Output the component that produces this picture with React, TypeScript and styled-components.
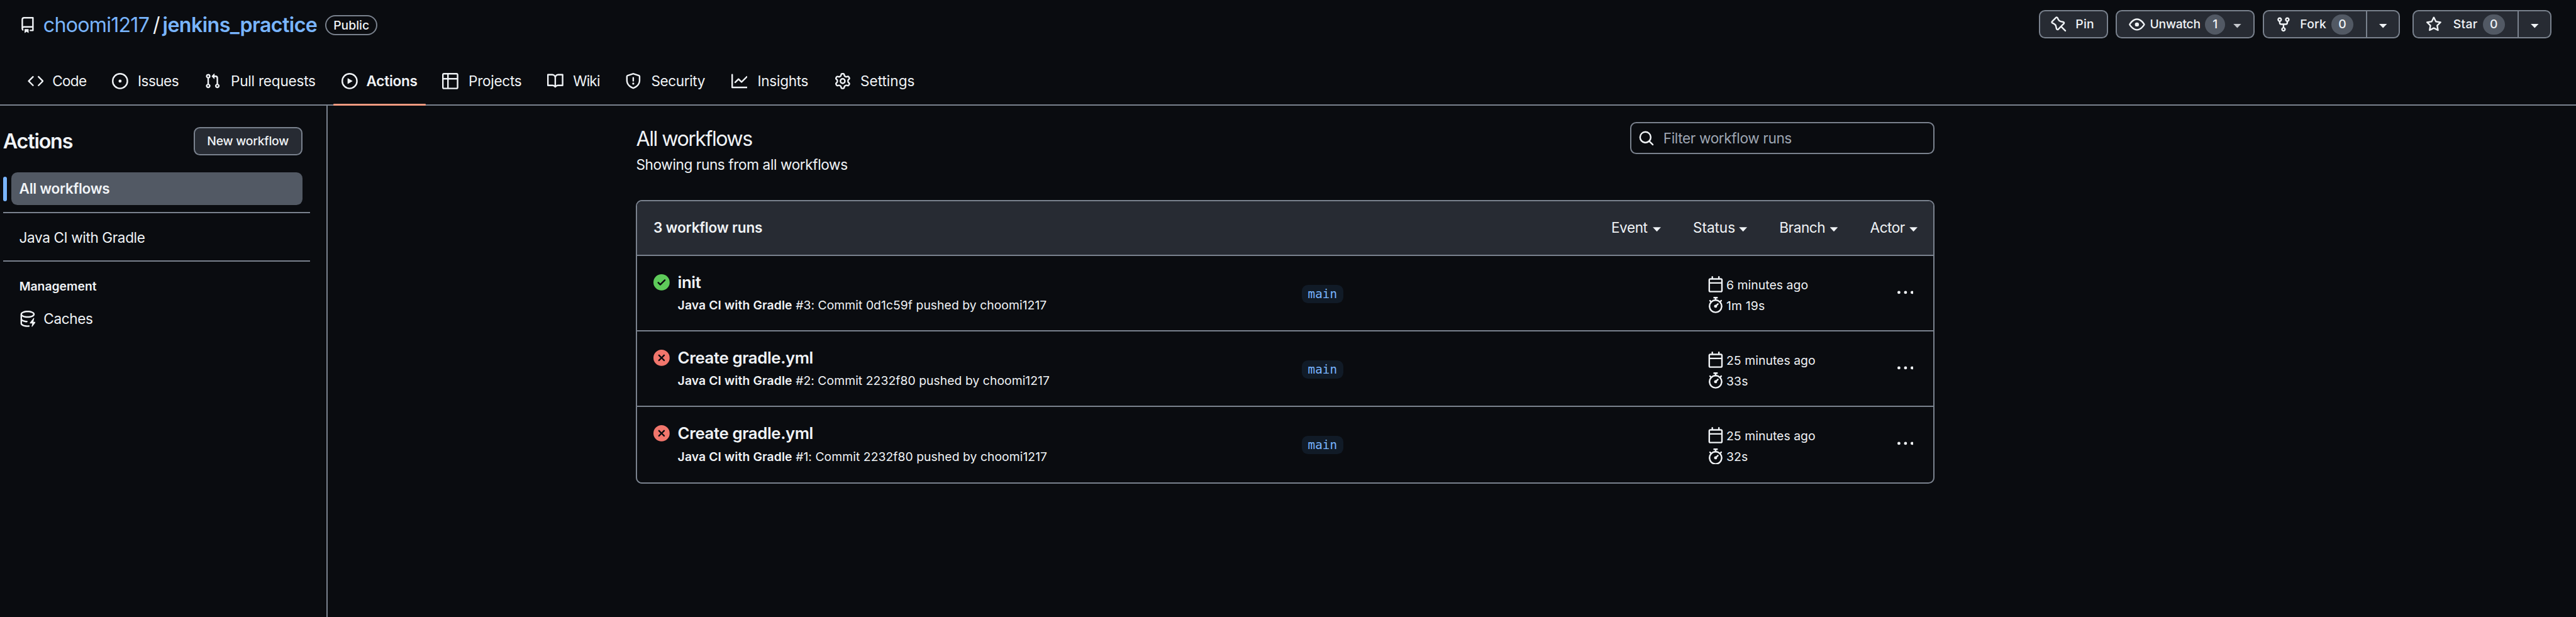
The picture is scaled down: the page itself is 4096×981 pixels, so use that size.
import React from "react";
import styled, { createGlobalStyle, css } from "styled-components";

/* One design unit is 4096 / 2539 of a device pixel. */
const UNIT = 4096 / 2539;
const u = (n: number) => `${+(n * UNIT).toFixed(3)}px`;

const color = {
  canvas: "#0a0c10",
  surface: "#272b33",
  selected: "#525964",
  border: "#7a828e",
  fg: "#f0f3f6",
  muted: "#9ea5b2",
  accent: "#79b5fe",
  underline: "#f29a80",
  success: "#5ecb5a",
  danger: "#f1766c",
  branchBg: "#111b27",
};

const LINE = "2px";

const Global = createGlobalStyle`
  *, *::before, *::after { box-sizing: border-box; }
  html, body { margin: 0; padding: 0; background: ${color.canvas}; }
  body { overflow: hidden; }
  h1, h2, p { margin: 0; font-weight: inherit; font-size: inherit; }
  button, input { font: inherit; color: inherit; margin: 0; padding: 0; border: 0; background: none; }
`;

/* ---------- icons ---------- */

const paths = {
  repo: "M2 2.5A2.5 2.5 0 0 1 4.5 0h8.75a.75.75 0 0 1 .75.75v12.5a.75.75 0 0 1-.75.75h-2.5a.75.75 0 0 1 0-1.5h1.75v-2h-8a1 1 0 0 0-.714 1.7.75.75 0 1 1-1.072 1.05A2.495 2.495 0 0 1 2 11.5Zm10.5-1h-8a1 1 0 0 0-1 1v6.708A2.486 2.486 0 0 1 4.5 9h8ZM5 12.25a.25.25 0 0 1 .25-.25h3.5a.25.25 0 0 1 .25.25v3.25a.25.25 0 0 1-.4.2l-1.45-1.087a.249.249 0 0 0-.3 0L5.4 15.7a.25.25 0 0 1-.4-.2Z",
  code: "m11.28 3.22 4.25 4.25a.75.75 0 0 1 0 1.06l-4.25 4.25a.749.749 0 0 1-1.275-.326.749.749 0 0 1 .215-.734L13.94 8l-3.72-3.72a.749.749 0 0 1 .326-1.275.749.749 0 0 1 .734.215Zm-6.56 0a.751.751 0 0 1 1.042.018.751.751 0 0 1 .018 1.042L2.06 8l3.72 3.72a.749.749 0 0 1-.326 1.275.749.749 0 0 1-.734-.215L.47 8.53a.75.75 0 0 1 0-1.06Z",
  issue: "M8 9.5a1.5 1.5 0 1 0 0-3 1.5 1.5 0 0 0 0 3ZM8 0a8 8 0 1 1 0 16A8 8 0 0 1 8 0ZM1.5 8a6.5 6.5 0 1 0 13 0 6.5 6.5 0 0 0-13 0Z",
  pull: "M1.5 3.25a2.25 2.25 0 1 1 3 2.122v5.256a2.251 2.251 0 1 1-1.5 0V5.372A2.25 2.25 0 0 1 1.5 3.25Zm5.677-.177L9.573.677A.25.25 0 0 1 10 .854V2.5h1A2.5 2.5 0 0 1 13.5 5v5.628a2.251 2.251 0 1 1-1.5 0V5a1 1 0 0 0-1-1h-1v1.646a.25.25 0 0 1-.427.177L7.177 3.427a.25.25 0 0 1 0-.354ZM3.75 2.5a.75.75 0 1 0 0 1.5.75.75 0 0 0 0-1.5Zm0 9.5a.75.75 0 1 0 0 1.5.75.75 0 0 0 0-1.5Zm8.25.75a.75.75 0 1 0 1.5 0 .75.75 0 0 0-1.5 0Z",
  play: "M8 0a8 8 0 1 1 0 16A8 8 0 0 1 8 0ZM1.5 8a6.5 6.5 0 1 0 13 0 6.5 6.5 0 0 0-13 0Zm4.879-2.773 4.264 2.559a.25.25 0 0 1 0 .428l-4.264 2.559A.25.25 0 0 1 6 10.559V5.442a.25.25 0 0 1 .379-.215Z",
  table: "M0 1.75C0 .784.784 0 1.75 0h12.5C15.216 0 16 .784 16 1.75v12.5A1.75 1.75 0 0 1 14.25 16H1.75A1.75 1.75 0 0 1 0 14.25ZM6.5 6.5v8h7.75a.25.25 0 0 0 .25-.25V6.5Zm8-1.5V1.75a.25.25 0 0 0-.25-.25H6.5V5Zm-13 1.5v7.75c0 .138.112.25.25.25H5v-8ZM5 5V1.5H1.75a.25.25 0 0 0-.25.25V5Z",
  book: "M0 1.75A.75.75 0 0 1 .75 1h4.253c1.227 0 2.317.59 3 1.501A3.743 3.743 0 0 1 11.006 1h4.245a.75.75 0 0 1 .75.75v10.5a.75.75 0 0 1-.75.75h-4.507a2.25 2.25 0 0 0-1.591.659l-.622.621a.75.75 0 0 1-1.06 0l-.622-.621A2.25 2.25 0 0 0 5.258 13H.75a.75.75 0 0 1-.75-.75Zm7.251 10.324.004-5.073-.002-2.253A2.25 2.25 0 0 0 5.003 2.5H1.5v9h3.757a3.75 3.75 0 0 1 1.994.574ZM8.755 4.75l-.004 7.322a3.752 3.752 0 0 1 1.992-.572H14.5v-9h-3.495a2.25 2.25 0 0 0-2.25 2.25Z",
  shield: "M7.467.133a1.748 1.748 0 0 1 1.066 0l5.25 1.68A1.75 1.75 0 0 1 15 3.48V7c0 1.566-.32 3.182-1.303 4.682-.983 1.498-2.585 2.813-5.032 3.855a1.697 1.697 0 0 1-1.33 0c-2.447-1.042-4.049-2.357-5.032-3.855C1.32 10.182 1 8.566 1 7V3.48a1.75 1.75 0 0 1 1.217-1.667Zm.61 1.429a.25.25 0 0 0-.153 0l-5.25 1.68a.25.25 0 0 0-.174.238V7c0 1.358.275 2.666 1.057 3.86.784 1.194 2.121 2.34 4.366 3.297a.196.196 0 0 0 .154 0c2.245-.956 3.582-2.104 4.366-3.298C13.225 9.666 13.5 8.36 13.5 7V3.48a.251.251 0 0 0-.174-.237l-5.25-1.68ZM8.75 4.75v3a.75.75 0 0 1-1.5 0v-3a.75.75 0 0 1 1.5 0ZM9 10.5a1 1 0 1 1-2 0 1 1 0 0 1 2 0Z",
  graph: "M1.5 1.75V13.5h13.75a.75.75 0 0 1 0 1.5H.75a.75.75 0 0 1-.75-.75V1.75a.75.75 0 0 1 1.5 0Zm14.28 2.53-5.25 5.25a.75.75 0 0 1-1.06 0L7 7.06 4.28 9.78a.751.751 0 0 1-1.042-.018.751.751 0 0 1-.018-1.042l3.25-3.25a.75.75 0 0 1 1.06 0L10 7.94l4.72-4.72a.751.751 0 0 1 1.042.018.751.751 0 0 1 .018 1.042Z",
  gear: "M8 0a8.2 8.2 0 0 1 .701.031C9.444.095 9.99.645 10.16 1.29l.288 1.107c.018.066.079.158.212.224.231.114.454.243.668.386.123.082.233.09.299.071l1.103-.303c.644-.176 1.392.021 1.82.63.27.385.506.792.704 1.218.315.675.111 1.422-.364 1.891l-.814.806c-.049.048-.098.147-.088.294.016.257.016.515 0 .772-.01.147.038.246.088.294l.814.806c.475.469.679 1.216.364 1.891a7.977 7.977 0 0 1-.704 1.217c-.428.61-1.176.807-1.82.63l-1.102-.302c-.067-.019-.177-.011-.3.071a5.909 5.909 0 0 1-.668.386c-.133.066-.194.158-.211.224l-.29 1.106c-.168.646-.715 1.196-1.458 1.26a8.006 8.006 0 0 1-1.402 0c-.743-.064-1.289-.614-1.458-1.26l-.289-1.106c-.018-.066-.079-.158-.212-.224a5.738 5.738 0 0 1-.668-.386c-.123-.082-.233-.09-.299-.071l-1.103.303c-.644.176-1.392-.021-1.82-.63a8.12 8.12 0 0 1-.704-1.218c-.315-.675-.111-1.422.363-1.891l.815-.806c.05-.048.098-.147.088-.294a6.214 6.214 0 0 1 0-.772c.01-.147-.038-.246-.088-.294l-.815-.806C.635 6.045.431 5.298.746 4.623a7.92 7.92 0 0 1 .704-1.217c.428-.61 1.176-.807 1.82-.63l1.102.302c.067.019.177.011.3-.071.214-.143.437-.272.668-.386.133-.066.194-.158.211-.224l.29-1.106C6.009.645 6.556.095 7.299.03 7.53.01 7.764 0 8 0Zm-.571 1.525c-.036.003-.108.036-.137.146l-.289 1.105c-.147.561-.549.967-.998 1.189-.173.086-.34.183-.5.29-.417.278-.97.423-1.529.27l-1.103-.303c-.109-.03-.175.016-.195.045-.22.312-.412.644-.573.99-.014.031-.021.11.059.19l.815.806c.411.406.562.957.53 1.456a4.709 4.709 0 0 0 0 .582c.032.499-.119 1.05-.53 1.456l-.815.806c-.081.08-.073.159-.059.19.162.346.353.677.573.989.02.03.085.076.195.046l1.102-.303c.56-.153 1.113-.008 1.53.27.161.107.328.204.501.29.447.222.85.629.997 1.189l.289 1.105c.029.109.101.143.137.146a6.6 6.6 0 0 0 1.142 0c.036-.003.108-.036.137-.146l.289-1.105c.147-.561.549-.967.998-1.189.173-.086.34-.183.5-.29.417-.278.97-.423 1.529-.27l1.103.303c.109.029.175-.016.195-.045.22-.313.411-.644.573-.99.014-.031.021-.11-.059-.19l-.815-.806c-.411-.406-.562-.957-.53-1.456a4.709 4.709 0 0 0 0-.582c-.032-.499.119-1.05.53-1.456l.815-.806c.081-.08.073-.159.059-.19a6.464 6.464 0 0 0-.573-.989c-.02-.03-.085-.076-.195-.046l-1.102.303c-.56.153-1.113.008-1.53-.27a4.44 4.44 0 0 0-.501-.29c-.447-.222-.85-.629-.997-1.189l-.289-1.105c-.029-.11-.101-.143-.137-.146a6.6 6.6 0 0 0-1.142 0ZM11 8a3 3 0 1 1-6 0 3 3 0 0 1 6 0ZM9.5 8a1.5 1.5 0 1 0-3.001.001A1.5 1.5 0 0 0 9.5 8Z",
  pin: "M4.456.734a1.75 1.75 0 0 1 2.826.504l.613 1.327a3.081 3.081 0 0 0 2.084 1.707l2.454.584c1.332.317 1.8 1.972.832 2.94L11.06 10l3.72 3.72a.748.748 0 0 1-.332 1.265.75.75 0 0 1-.729-.205L10 11.06l-2.204 2.205c-.968.968-2.623.5-2.94-.832l-.584-2.454a3.081 3.081 0 0 0-1.707-2.084l-1.327-.613a1.75 1.75 0 0 1-.504-2.826L4.456.734ZM5.92 1.866a.25.25 0 0 0-.404-.072L1.794 5.516a.25.25 0 0 0 .072.404l1.328.613A4.582 4.582 0 0 1 5.73 9.63l.584 2.454a.25.25 0 0 0 .42.12l5.47-5.47a.25.25 0 0 0-.12-.42L9.63 5.73a4.581 4.581 0 0 1-3.098-2.537L5.92 1.866Z",
  eye: "M8 2c1.981 0 3.671.992 4.933 2.078 1.27 1.091 2.187 2.345 2.637 3.023a1.62 1.62 0 0 1 0 1.798c-.45.678-1.367 1.932-2.637 3.023C11.67 13.008 9.981 14 8 14c-1.981 0-3.671-.992-4.933-2.078C1.797 10.83.88 9.576.43 8.898a1.62 1.62 0 0 1 0-1.798c.45-.677 1.367-1.931 2.637-3.022C4.33 2.992 6.019 2 8 2ZM1.679 7.932a.12.12 0 0 0 0 .136c.411.622 1.241 1.75 2.366 2.717C5.176 11.758 6.527 12.5 8 12.5c1.473 0 2.825-.742 3.955-1.715 1.124-.967 1.954-2.096 2.366-2.717a.12.12 0 0 0 0-.136c-.412-.621-1.242-1.75-2.366-2.717C10.824 4.242 9.473 3.5 8 3.5c-1.473 0-2.825.742-3.955 1.715-1.124.967-1.954 2.096-2.366 2.717ZM8 10a2 2 0 1 1-.001-3.999A2 2 0 0 1 8 10Z",
  fork: "M5 5.372v.878c0 .414.336.75.75.75h4.5a.75.75 0 0 0 .75-.75v-.878a2.25 2.25 0 1 1 1.5 0v.878a2.25 2.25 0 0 1-2.25 2.25h-1.5v2.128a2.251 2.251 0 1 1-1.5 0V8.5h-1.5A2.25 2.25 0 0 1 3.5 6.25v-.878a2.25 2.25 0 1 1 1.5 0ZM5 3.25a.75.75 0 1 0-1.5 0 .75.75 0 0 0 1.5 0Zm6.75.75a.75.75 0 1 0 0-1.5.75.75 0 0 0 0 1.5Zm-3 8.75a.75.75 0 1 0-1.5 0 .75.75 0 0 0 1.5 0Z",
  star: "M8 .25a.75.75 0 0 1 .673.418l1.882 3.815 4.21.612a.75.75 0 0 1 .416 1.279l-3.046 2.97.719 4.192a.751.751 0 0 1-1.088.791L8 12.347l-3.766 1.98a.75.75 0 0 1-1.088-.79l.72-4.194L.818 6.374a.75.75 0 0 1 .416-1.28l4.21-.611L7.327.668A.75.75 0 0 1 8 .25Zm0 2.445L6.615 5.5a.75.75 0 0 1-.564.41l-3.097.45 2.24 2.184a.75.75 0 0 1 .216.664l-.528 3.084 2.769-1.456a.75.75 0 0 1 .698 0l2.77 1.456-.53-3.084a.75.75 0 0 1 .216-.664l2.24-2.183-3.096-.45a.75.75 0 0 1-.564-.41L8 2.694Z",
  search: "M10.68 11.74a6 6 0 0 1-7.922-8.982 6 6 0 0 1 8.982 7.922l3.04 3.04a.749.749 0 0 1-.326 1.275.749.749 0 0 1-.734-.215ZM11.5 7a4.499 4.499 0 1 0-8.997 0A4.499 4.499 0 0 0 11.5 7Z",
  success: "M8 16A8 8 0 1 1 8 0a8 8 0 0 1 0 16Zm3.78-9.72a.751.751 0 0 0-.018-1.042.751.751 0 0 0-1.042-.018L6.75 9.19 5.28 7.72a.751.751 0 0 0-1.042.018.751.751 0 0 0-.018 1.042l2 2a.75.75 0 0 0 1.06 0Z",
  failure: "M2.343 13.657A8 8 0 1 1 13.658 2.343 8 8 0 0 1 2.343 13.657ZM6.03 4.97a.751.751 0 0 0-1.042.018.751.751 0 0 0-.018 1.042L6.94 8 4.97 9.97a.749.749 0 0 0 .326 1.275.749.749 0 0 0 .734-.215L8 9.06l1.97 1.97a.749.749 0 0 0 1.275-.326.749.749 0 0 0-.215-.734L9.06 8l1.97-1.97a.749.749 0 0 0-.326-1.275.749.749 0 0 0-.734.215L8 6.94Z",
  calendar: "M4.75 0a.75.75 0 0 1 .75.75V2h5V.75a.75.75 0 0 1 1.5 0V2h1.25c.966 0 1.75.784 1.75 1.75v10.5A1.75 1.75 0 0 1 13.25 16H2.75A1.75 1.75 0 0 1 1 14.25V3.75C1 2.784 1.784 2 2.75 2H4V.75A.75.75 0 0 1 4.75 0ZM2.5 7.5v6.75c0 .138.112.25.25.25h10.5a.25.25 0 0 0 .25-.25V7.5Zm10.75-4H2.75a.25.25 0 0 0-.25.25V6h11V3.75a.25.25 0 0 0-.25-.25Z",
  stopwatch: "M5.75.75A.75.75 0 0 1 6.5 0h3a.75.75 0 0 1 0 1.5h-.75v1l-.001.041a6.724 6.724 0 0 1 3.464 1.435l.007-.006.75-.75a.749.749 0 0 1 1.275.326.749.749 0 0 1-.215.734l-.75.75-.006.007a6.75 6.75 0 1 1-10.548 0L2.72 5.03l-.75-.75a.751.751 0 0 1 .018-1.042.751.751 0 0 1 1.042-.018l.75.75.007.006A6.72 6.72 0 0 1 7.25 2.541V1.5H6.5a.75.75 0 0 1-.75-.75ZM8 14.5a5.25 5.25 0 1 0-.001-10.501A5.25 5.25 0 0 0 8 14.5Zm.389-6.7 1.33-1.33a.75.75 0 1 1 1.061 1.06L9.45 8.861A1.503 1.503 0 0 1 8 10.75a1.499 1.499 0 1 1 .389-2.95Z",
  kebab: "M8 9.5a1.5 1.5 0 1 0 0-3 1.5 1.5 0 0 0 0 3ZM1.5 9.5a1.5 1.5 0 1 0 0-3 1.5 1.5 0 0 0 0 3Zm13 0a1.5 1.5 0 1 0 0-3 1.5 1.5 0 0 0 0 3Z",
  cache: "M2.5 5.724V8c0 .248.238.7 1.169 1.159.874.43 2.144.745 3.62.822a.75.75 0 1 1-.078 1.498c-1.622-.085-3.102-.432-4.204-.975a5.565 5.565 0 0 1-.507-.28V12.5c0 .133.058.318.282.551.227.237.591.483 1.101.707 1.015.447 2.47.742 4.117.742.406 0 .802-.018 1.183-.052a.751.751 0 1 1 .134 1.494C8.89 15.98 8.45 16 8 16c-1.805 0-3.475-.32-4.721-.869-.623-.274-1.173-.619-1.579-1.041-.408-.425-.7-.964-.7-1.59v-9c0-.626.292-1.165.7-1.591.406-.42.956-.766 1.579-1.04C4.525.32 6.195 0 8 0c1.806 0 3.476.32 4.721.869.623.274 1.173.619 1.579 1.041.408.425.7.964.7 1.59 0 .626-.292 1.165-.7 1.591-.406.42-.956.766-1.578 1.04C11.475 6.68 9.805 7 8 7c-1.805 0-3.475-.32-4.721-.869a6.15 6.15 0 0 1-.779-.407Zm0-2.224c0 .133.058.318.282.551.227.237.591.483 1.101.707C4.898 5.205 6.353 5.5 8 5.5c1.646 0 3.101-.295 4.118-.742.508-.224.873-.471 1.1-.708.224-.232.282-.417.282-.55 0-.133-.058-.318-.282-.551-.227-.237-.591-.483-1.101-.707C11.102 1.795 9.647 1.5 8 1.5c-1.646 0-3.101.295-4.118.742-.508.224-.873.471-1.1.708-.224.232-.282.417-.282.55ZM14.49 7.582a.375.375 0 0 0-.66-.313l-3.625 4.625a.375.375 0 0 0 .295.606h2.127l-.619 2.922a.375.375 0 0 0 .666.304l3.125-4.125A.375.375 0 0 0 15.5 11h-1.778l.769-3.418Z",
};

type IconName = keyof typeof paths;

const Svg = styled.svg<{ $color?: string }>`
  flex: none;
  display: block;
  width: ${u(16)};
  height: ${u(16)};
  fill: ${(p) => p.$color ?? color.fg};
`;

const Icon = ({ name, tint }: { name: IconName; tint?: string }) => (
  <Svg viewBox="0 0 16 16" $color={tint} aria-hidden="true">
    <path fillRule="evenodd" d={paths[name]} />
  </Svg>
);

const Caret = styled.span<{ $dim?: boolean }>`
  flex: none;
  width: ${u(8)};
  height: ${u(4.3)};
  margin-top: ${u(3)};
  clip-path: polygon(0 0, 100% 0, 50% 100%);
  background: ${(p) => (p.$dim ? "#c4c7cc" : color.fg)};
`;

/* ---------- text ---------- */

const Label = styled.span<{ $w?: number; $ls?: number }>`
  flex: none;
  white-space: nowrap;
  letter-spacing: ${(p) => p.$ls ?? 0}em;
  ${(p) => p.$w !== undefined && css`width: ${u(p.$w)};`}
`;

/* ---------- page ---------- */

const Page = styled.div`
  width: 4096px;
  height: 981px;
  display: flex;
  flex-direction: column;
  overflow: hidden;
  background: ${color.canvas};
  color: ${color.fg};
  font: 400 ${u(14)} / ${u(21)} Inter, "Noto Sans", sans-serif;
`;

const Header = styled.header`
  flex: none;
  height: 168px;
  display: flex;
  flex-direction: column;
  border-bottom: ${LINE} solid ${color.border};
`;

const TitleBar = styled.div`
  flex: none;
  height: ${u(56)};
  display: flex;
  align-items: flex-start;
  padding: 0 ${u(24)} 0 ${u(19)};
`;

const RepoTitle = styled.h1`
  height: ${u(50)};
  display: flex;
  align-items: center;
  font-size: ${u(20)};
  line-height: ${u(30)};
`;

const Owner = styled(Label)`
  margin-left: ${u(7.7)};
  color: ${color.accent};
`;

const Slash = styled.span`
  width: ${u(10.7)};
  text-align: center;
`;

const RepoName = styled(Label)`
  padding-left: ${u(0.7)};
  color: ${color.accent};
  font-weight: 600;
`;

const Visibility = styled.span`
  width: ${u(51.4)};
  height: ${u(20)};
  display: flex;
  align-items: center;
  justify-content: center;
  border: ${LINE} solid ${color.border};
  border-radius: ${u(10)};
  font-size: ${u(12)};
  font-weight: 500;
`;

const ActionBar = styled.div`
  margin: ${u(10)} 0 0 auto;
  display: flex;
  gap: ${u(8)};
`;

const ButtonGroup = styled.div<{ $w: number; $after?: number }>`
  width: ${(p) => u(p.$w)};
  height: ${u(28)};
  margin-right: ${(p) => u(p.$after ?? 0)};
  display: flex;
  align-items: stretch;
  overflow: hidden;
  background: ${color.surface};
  border: ${LINE} solid ${color.border};
  border-radius: ${u(6)};
  font-size: ${u(12)};
  line-height: ${u(18)};
  font-weight: 500;
`;

const ButtonPart = styled.button<{ $gap?: number; $pad?: number }>`
  flex: 1;
  display: flex;
  align-items: center;
  gap: ${(p) => u(p.$gap ?? 8)};
  padding-left: ${(p) => u(p.$pad ?? 11.6)};
`;

const CaretPart = styled.button<{ $w: number }>`
  flex: none;
  width: ${(p) => u(p.$w)};
  display: flex;
  align-items: center;
  justify-content: center;
  border-left: ${LINE} solid ${color.border};
`;

const Counter = styled.span<{ $w: number; $shift?: number }>`
  flex: none;
  width: ${(p) => u(p.$w)};
  height: ${u(20)};
  margin-right: ${(p) => u(p.$shift ?? 0)};
  border-radius: ${u(10)};
  display: flex;
  align-items: center;
  justify-content: center;
  background: ${color.selected};
`;

const Nav = styled.nav`
  flex: none;
  display: flex;
  gap: ${u(8)};
  padding-left: ${u(19)};
`;

const Tab = styled.a<{ $w: number; $gap: number; $active?: boolean }>`
  position: relative;
  flex: none;
  width: ${(p) => u(p.$w)};
  height: ${u(48)};
  display: flex;
  align-items: center;
  gap: ${(p) => u(p.$gap)};
  padding-left: ${u(8)};
  font-weight: ${(p) => (p.$active ? 600 : 400)};

  ${(p) =>
    p.$active &&
    css`
      &::after {
        content: "";
        position: absolute;
        left: 0;
        bottom: 0;
        width: 100%;
        height: 3px;
        border-radius: 1px;
        background: ${color.underline};
      }
    `}
`;

const Body = styled.div`
  flex: 1;
  min-height: 0;
  display: flex;
`;

/* ---------- sidebar ---------- */

const Sidebar = styled.aside`
  flex: none;
  width: ${u(323)};
  padding: ${u(21)} ${u(16)} 0 ${u(3)};
  border-right: ${LINE} solid ${color.border};
`;

const SideHead = styled.div`
  height: ${u(28)};
  display: flex;
  align-items: center;
  justify-content: space-between;
  padding-right: ${u(7.8)};
`;

const SideTitle = styled.h2`
  font-size: ${u(20)};
  line-height: ${u(30)};
  font-weight: 600;
  letter-spacing: -0.0368em;
  padding-top: ${u(1)};
`;

const SideItem = styled.a<{ $selected?: boolean; $top: number }>`
  position: relative;
  height: ${u(32)};
  margin: ${(p) => u(p.$top)} ${u(7.8)} 0 ${u(8)};
  padding-left: ${u(8)};
  display: flex;
  align-items: center;
  gap: ${u(8)};
  border-radius: ${u(6)};

  ${(p) =>
    p.$selected &&
    css`
      background: ${color.selected};
      font-weight: 600;

      &::before {
        content: "";
        position: absolute;
        left: -${u(8)};
        top: ${u(4)};
        width: ${u(4)};
        height: ${u(24)};
        border-radius: ${u(2)};
        background: ${color.accent};
      }
    `}
`;

const SideRule = styled.div<{ $top: number }>`
  height: ${LINE};
  margin-top: calc(${(p) => u(p.$top)} - 0.4px);
  background: ${color.border};
`;

const SideCaption = styled.div`
  margin: ${u(15)} 0 0 ${u(16)};
  font-size: ${u(12)};
  line-height: ${u(18)};
  font-weight: 600;
`;

/* ---------- main ---------- */

const Main = styled.main`
  width: ${u(304 + 1280)};
  padding: ${u(16)} 0 0 ${u(304)};
`;

const Intro = styled.div`
  height: ${u(77)};
  display: flex;
  justify-content: space-between;
`;

const Heading = styled.h2`
  margin-top: ${u(1.9)};
  font-size: ${u(20)};
  line-height: ${u(30)};
`;

const Search = styled.label`
  width: ${u(300)};
  height: ${u(32)};
  display: flex;
  align-items: center;
  gap: ${u(8.8)};
  padding-left: ${u(6.4)};
  border: ${LINE} solid ${color.border};
  border-radius: ${u(6)};

  input {
    flex: 1;
    outline: none;
    letter-spacing: -0.0163em;
  }
  input::placeholder {
    color: ${color.muted};
    opacity: 1;
  }
`;

const Runs = styled.section`
  height: ${u(279.5)};
  overflow: hidden;
  border: ${LINE} solid ${color.border};
  border-radius: ${u(6)};
`;

const RunsHead = styled.div`
  height: calc(${u(55)} - 2px);
  display: flex;
  align-items: center;
  justify-content: space-between;
  padding: 0 calc(${u(17)} - 2px);
  background: ${color.surface};
  border-bottom: ${LINE} solid ${color.border};
`;

const RunsCount = styled(Label)`
  font-weight: 600;
`;

const Filters = styled.div`
  display: flex;
  gap: ${u(31.7)};
`;

const Filter = styled.button`
  display: flex;
  align-items: center;
  text-align: left;
`;

const Run = styled.article`
  height: ${u(74.5)};
  display: grid;
  grid-template-columns: ${u(24)} ${u(615)} ${u(399.7)} ${u(187.3)} 1fr;
  align-items: start;
  padding-left: calc(${u(17)} - 2px);

  &:not(:last-child) {
    border-bottom: ${LINE} solid ${color.border};
  }
`;

const RunStatus = styled.div`
  margin-top: ${u(18)};
`;

const RunText = styled.div`
  padding-top: ${u(14.2)};
`;

const RunTitle = styled.p`
  font-size: ${u(16)};
  line-height: ${u(24)};
  font-weight: 600;
  letter-spacing: -0.0152em;
`;

const RunMeta = styled.p`
  margin-top: ${u(1.8)};
  font-size: ${u(12)};
  line-height: ${u(18)};
  white-space: nowrap;
  letter-spacing: 0.002em;

  b {
    font-weight: 600;
    letter-spacing: 0.005em;
  }
`;

const Branch = styled.span`
  justify-self: start;
  margin-top: ${u(28.5)};
  width: ${u(41)};
  height: ${u(18)};
  display: flex;
  align-items: center;
  justify-content: center;
  border-radius: ${u(6)};
  background: ${color.branchBg};
  color: ${color.accent};
  font: 400 ${u(12)} / ${u(18)} "DejaVu Sans Mono", monospace;
`;

const RunTimes = styled.div`
  padding-top: ${u(20)};
  font-size: ${u(12)};
`;

const TimeLine = styled.div`
  height: ${u(16)};
  margin-bottom: ${u(4.6)};
  display: flex;
  align-items: center;
  gap: ${u(2.9)};

  span {
    padding-top: ${u(2.2)};
  }
`;

const RunMenu = styled.button`
  margin-top: ${u(28)};
  justify-self: start;
`;

/* ---------- data ---------- */

const tabs: { icon: IconName; label: string; w: number; gap: number; ls: number; active?: boolean }[] = [
  { icon: "code", label: "Code", w: 75.5, gap: 8.6, ls: -0.03 },
  { icon: "issue", label: "Issues", w: 83.2, gap: 9.3, ls: -0.0238 },
  { icon: "pull", label: "Pull requests", w: 127, gap: 9.8, ls: -0.0095 },
  { icon: "play", label: "Actions", w: 91.2, gap: 8.4, ls: -0.011, active: true },
  { icon: "table", label: "Projects", w: 95.4, gap: 10, ls: -0.0125 },
  { icon: "book", label: "Wiki", w: 69, gap: 9.6, ls: -0.0348 },
  { icon: "shield", label: "Security", w: 96.5, gap: 9.6, ls: -0.0175 },
  { icon: "graph", label: "Insights", w: 93.7, gap: 10, ls: -0.0135 },
  { icon: "gear", label: "Settings", w: 95, gap: 9.6, ls: 0 },
];

const filters = [
  { label: "Event", w: 41, ls: -0.0188 },
  { label: "Status", w: 45.3, ls: -0.003 },
  { label: "Branch", w: 49.8, ls: -0.0181 },
  { label: "Actor", w: 38.8, ls: -0.0204 },
];

const runs = [
  { ok: true, title: "init", number: 3, commit: "0d1c59f", ago: "6 minutes ago", took: "1m 19s" },
  { ok: false, title: "Create gradle.yml", number: 2, commit: "2232f80", ago: "25 minutes ago", took: "33s" },
  { ok: false, title: "Create gradle.yml", number: 1, commit: "2232f80", ago: "25 minutes ago", took: "32s" },
];

export default function App() {
  return (
    <Page>
      <Global />
      <Header>
        <TitleBar>
          <RepoTitle>
            <Icon name="repo" />
            <Owner $w={106.2} $ls={-0.0252}>choomi1217</Owner>
            <Slash>/</Slash>
            <RepoName $w={161} $ls={-0.0185}>jenkins_practice</RepoName>
            <Visibility>Public</Visibility>
          </RepoTitle>
          <ActionBar>
            <ButtonGroup $w={68}>
              <ButtonPart $pad={10.8} $gap={8.2}>
                <Icon name="pin" />
                <Label $ls={0.01}>Pin</Label>
              </ButtonPart>
            </ButtonGroup>
            <ButtonGroup $w={136.5}>
              <ButtonPart $gap={3} $pad={11.7}>
                <Icon name="eye" />
                <Label $w={52.9} $ls={-0.013}>Unwatch</Label>
                <Counter $w={20} $shift={4.8}>1</Counter>
                <Caret $dim />
              </ButtonPart>
            </ButtonGroup>
            <ButtonGroup $w={135.5} $after={4.2}>
              <ButtonPart $gap={8.2}>
                <Icon name="fork" />
                <Label $w={22.4} $ls={0.0084}>Fork</Label>
                <Counter $w={22}>0</Counter>
              </ButtonPart>
              <CaretPart $w={32.2}>
                <Caret />
              </CaretPart>
            </ButtonGroup>
            <ButtonGroup $w={137.3}>
              <ButtonPart $gap={11.5}>
                <Icon name="star" />
                <Label $w={17.5} $ls={0.013}>Star</Label>
                <Counter $w={22}>0</Counter>
              </ButtonPart>
              <CaretPart $w={32.2}>
                <Caret />
              </CaretPart>
            </ButtonGroup>
          </ActionBar>
        </TitleBar>
        <Nav>
          {tabs.map((t) => (
            <Tab key={t.label} $w={t.w} $gap={t.gap} $active={t.active}>
              <Icon name={t.icon} />
              <Label $ls={t.ls}>{t.label}</Label>
            </Tab>
          ))}
        </Nav>
      </Header>

      <Body>
        <Sidebar>
          <SideHead>
            <SideTitle>Actions</SideTitle>
            <ButtonGroup $w={107.3}>
              <ButtonPart $pad={12.2}>
                <Label $ls={-0.0115}>New workflow</Label>
              </ButtonPart>
            </ButtonGroup>
          </SideHead>
          <SideItem $selected $top={17}>
            <Label $ls={-0.0139}>All workflows</Label>
          </SideItem>
          <SideRule $top={7} />
          <SideItem $top={8}>
            <Label $ls={-0.0173}>Java CI with Gradle</Label>
          </SideItem>
          <SideRule $top={7} />
          <SideCaption>Management</SideCaption>
          <SideItem $top={7}>
            <Icon name="cache" />
            <Label $ls={-0.0173}>Caches</Label>
          </SideItem>
        </Sidebar>

        <Main>
          <Intro>
            <div>
              <Heading>
                <Label $ls={-0.0481}>All workflows</Label>
              </Heading>
              <Label $ls={-0.0171}>Showing runs from all workflows</Label>
            </div>
            <Search>
              <Icon name="search" />
              <input placeholder="Filter workflow runs" />
            </Search>
          </Intro>

          <Runs>
            <RunsHead>
              <RunsCount $ls={-0.0088}>3 workflow runs</RunsCount>
              <Filters>
                {filters.map((f) => (
                  <Filter key={f.label}>
                    <Label $w={f.w} $ls={f.ls}>{f.label}</Label>
                    <Caret />
                  </Filter>
                ))}
              </Filters>
            </RunsHead>
            {runs.map((r) => (
              <Run key={r.number}>
                <RunStatus>
                  <Icon name={r.ok ? "success" : "failure"} tint={r.ok ? color.success : color.danger} />
                </RunStatus>
                <RunText>
                  <RunTitle>{r.title}</RunTitle>
                  <RunMeta>
                    <b>Java CI with Gradle</b> #{r.number}: Commit {r.commit} pushed by choomi1217
                  </RunMeta>
                </RunText>
                <Branch>main</Branch>
                <RunTimes>
                  <TimeLine>
                    <Icon name="calendar" />
                    <Label $ls={0.003}>{r.ago}</Label>
                  </TimeLine>
                  <TimeLine>
                    <Icon name="stopwatch" />
                    <Label $ls={0.008}>{r.took}</Label>
                  </TimeLine>
                </RunTimes>
                <RunMenu aria-label="Show options">
                  <Icon name="kebab" />
                </RunMenu>
              </Run>
            ))}
          </Runs>
        </Main>
      </Body>
    </Page>
  );
}
